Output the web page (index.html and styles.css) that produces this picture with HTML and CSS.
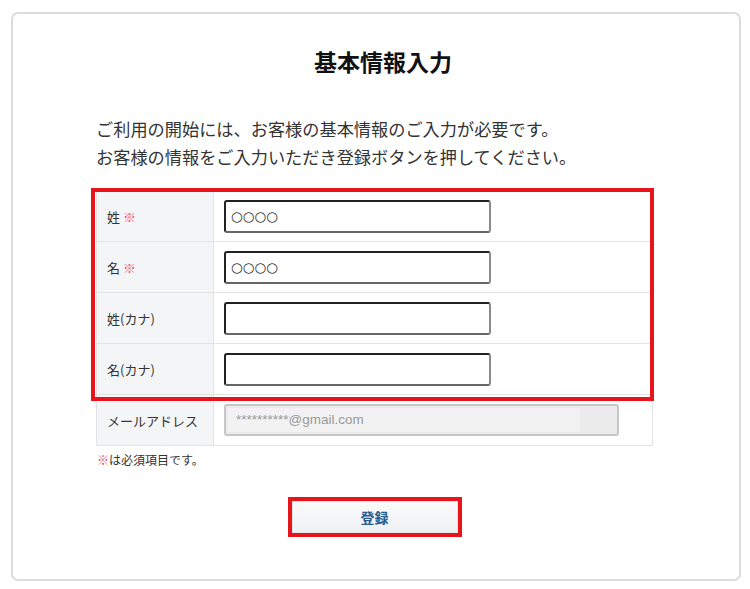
FILE: index.html
```html
<!DOCTYPE html>
<html lang="ja">
<head>
<meta charset="utf-8">
<title>基本情報入力</title>
<link rel="stylesheet" href="styles.css">
</head>
<body>
<div class="card">
  <h1 class="title">基本情報入力</h1>
  <p class="lead">ご利用の開始には、お客様の基本情報のご入力が必要です。<br>お客様の情報をご入力いただき登録ボタンを押してください。</p>
  <div class="form-table">
    <div class="group-highlight">
      <div class="row">
        <div class="label">姓 <span class="req">※</span></div>
        <div class="cell"><input class="text-input" type="text" value="○○○○"></div>
      </div>
      <div class="row">
        <div class="label">名 <span class="req">※</span></div>
        <div class="cell"><input class="text-input" type="text" value="○○○○"></div>
      </div>
      <div class="row">
        <div class="label">姓(カナ)</div>
        <div class="cell"><input class="text-input" type="text" value=""></div>
      </div>
      <div class="row">
        <div class="label">名(カナ)</div>
        <div class="cell"><input class="text-input" type="text" value=""></div>
      </div>
    </div>
    <div class="row">
      <div class="label">メールアドレス</div>
      <div class="cell">
        <div class="readonly-input"><span class="autofill">**********@gmail.com</span></div>
      </div>
    </div>
  </div>
  <p class="note"><span class="req-note">※</span>は必須項目です。</p>
  <div class="actions">
    <button class="submit" type="button">登録</button>
  </div>
</div>
</body>
</html>
```

FILE: styles.css
```css
html, body {
  margin: 0;
  padding: 0;
  background: #ffffff;
}

body {
  font-family: "Noto Sans CJK JP", "Noto Sans", sans-serif;
  color: #333333;
}

.card {
  box-sizing: border-box;
  width: 730px;
  height: 569px;
  margin: 12px 0 0 11px;
  border: 2px solid #dcdcdc;
  border-radius: 7px;
  padding: 32px 86px 0 83px;
  background: #ffffff;
}

.title {
  margin: 0;
  padding-left: 17px;
  font-size: 23px;
  line-height: 30px;
  font-weight: 700;
  color: #111111;
  text-align: center;
}

.lead {
  margin: 39px 0 0 0;
  font-size: 17.2px;
  line-height: 28px;
  color: #333333;
}

.form-table {
  margin-top: 19px;
  border: 1px solid #e3e3e3;
  border-bottom: none;
  display: flex;
  flex-direction: column;
}

.group-highlight {
  position: relative;
  display: flex;
  flex-direction: column;
}

.group-highlight::after {
  content: "";
  position: absolute;
  top: -3px;
  right: -2px;
  bottom: -6px;
  left: -6px;
  border: 4px solid #e8141c;
  pointer-events: none;
}

.row {
  display: flex;
  height: 51px;
  box-sizing: border-box;
  border-bottom: 1px solid #e3e3e3;
}

.label {
  box-sizing: border-box;
  width: 117px;
  flex: none;
  display: flex;
  align-items: center;
  padding-left: 10px;
  background: #f4f5f7;
  border-right: 1px solid #e3e3e3;
  font-size: 13px;
  color: #333333;
  white-space: pre;
}

.req {
  color: #f25a78;
}

.cell {
  flex: 1;
  display: flex;
  align-items: center;
  padding-left: 10px;
}

.text-input {
  box-sizing: border-box;
  width: 267px;
  height: 33px;
  margin: 0;
  padding: 0 0 0 5px;
  border: 2px solid #555555;
  border-top-color: #222222;
  border-left-color: #222222;
  border-right-color: #8a8a8a;
  border-bottom-color: #666666;
  border-radius: 3px;
  background: #ffffff;
  font-family: "DejaVu Sans", sans-serif;
  font-size: 13.5px;
  color: #333333;
  outline: none;
}

.readonly-input {
  box-sizing: border-box;
  width: 395px;
  height: 32px;
  border: 2px solid #c6c6c6;
  border-radius: 3px;
  background: #ebebeb;
  display: flex;
  align-items: center;
  padding-left: 2px;
}

.autofill {
  box-sizing: border-box;
  width: 352px;
  height: 24px;
  padding-left: 8px;
  background: #f2f2f2;
  font-family: "Liberation Sans", "Noto Sans", sans-serif;
  font-size: 13.5px;
  line-height: 24px;
  color: #9a9a9a;
}

.note {
  margin: 5px 0 0 1px;
  font-size: 12px;
  line-height: 18px;
  color: #333333;
}

.req-note {
  color: #f0405f;
}

.actions {
  display: flex;
  justify-content: center;
  margin-top: 32px;
}

.submit {
  box-sizing: border-box;
  width: 166px;
  height: 32px;
  margin: 0;
  padding: 0;
  border: 1px solid #e2e4e6;
  outline: 4px solid #e8141c;
  background: linear-gradient(#fbfbfb, #eef0f2);
  font-family: "Noto Sans CJK JP", sans-serif;
  font-size: 14px;
  font-weight: 700;
  color: #2b5b8c;
  cursor: pointer;
}
```
